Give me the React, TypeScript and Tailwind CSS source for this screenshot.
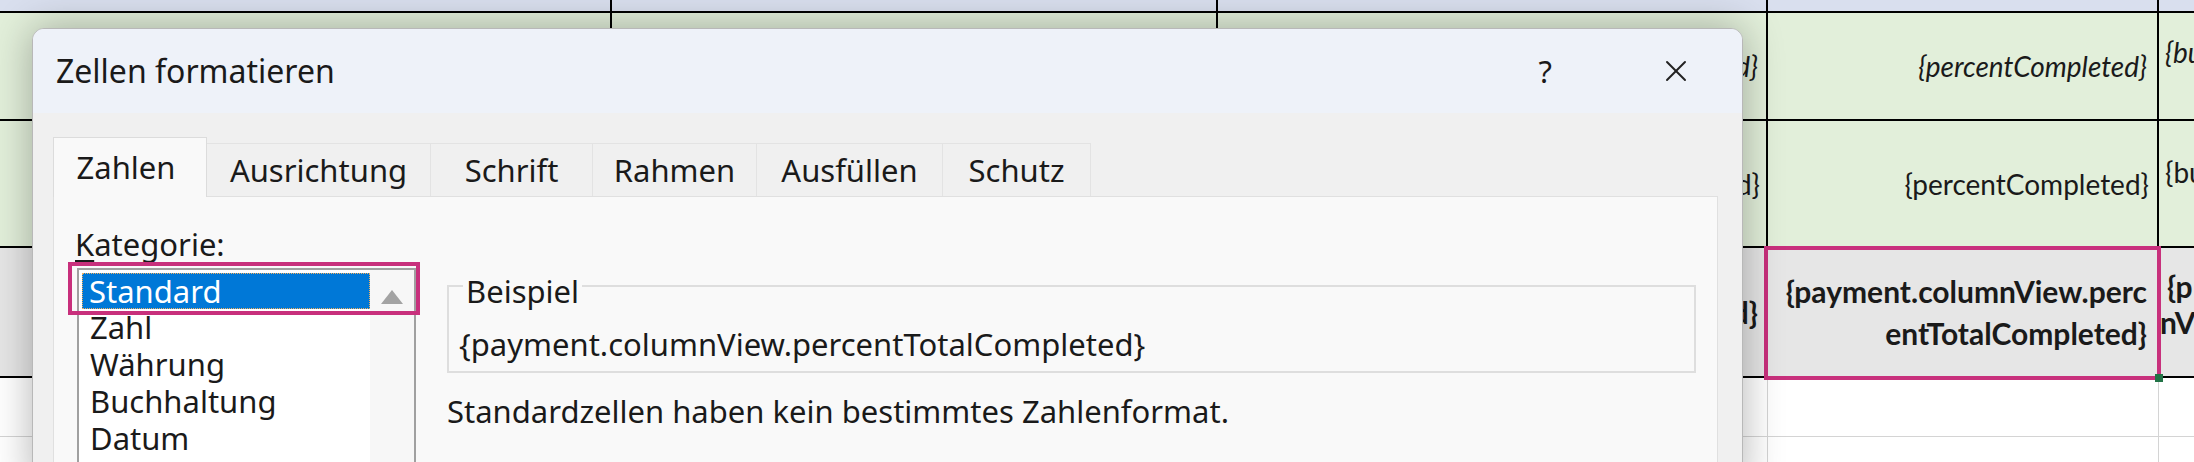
import { X } from "lucide-react";

const ui = { fontFamily: '"Noto Sans", "Open Sans", sans-serif' };
const xl = { fontFamily: 'Lato, "Liberation Sans", sans-serif' };

const tabs = [
  { label: "Zahlen", w: "w-[154px]" },
  { label: "Ausrichtung", w: "w-[224px]" },
  { label: "Schrift", w: "w-[162px]" },
  { label: "Rahmen", w: "w-[164px]" },
  { label: "Ausfüllen", w: "w-[186px]" },
  { label: "Schutz", w: "w-[148px]" },
];
const categories = ["Zahl", "Währung", "Buchhaltung", "Datum", "Uhrzeit"];

function Sheet() {
  return (
    <div
      className="grid h-[462px] w-[2194px] grid-cols-[612px_606px_550px_391px_35px] grid-rows-[13px_108px_127px_130px_59px_25px] text-[28px] text-[#1a1a1a]"
      style={xl}
    >
      {/* header strip */}
      <div className="border-r-2 border-b-2 border-black bg-[#d9dfee]" />
      <div className="border-r-2 border-b-2 border-black bg-[#d9dfee]" />
      <div className="border-r-2 border-b-2 border-black bg-[#d9dfee]" />
      <div className="border-r-2 border-b-2 border-black bg-[#d9dfee]" />
      <div className="border-b-2 border-black bg-[#d9dfee]" />

      {/* row 1 */}
      <div className="border-r-2 border-b-2 border-black bg-[#e2efda]" />
      <div className="border-r-2 border-b-2 border-black bg-[#e2efda]" />
      <div className="flex items-center justify-end border-r-2 border-b-2 border-black bg-[#e2efda] pr-[8px] italic">
        {"{payment.percentTotalCompleted}"}
      </div>
      <div className="flex items-center justify-end border-r-2 border-b-2 border-black bg-[#e2efda] pr-[10px] italic">
        {"{percentCompleted}"}
      </div>
      <div className="overflow-hidden whitespace-nowrap border-b-2 border-black bg-[#e2efda] pt-[18px] pl-[6px] italic">
        {"{budget}"}
      </div>

      {/* row 2 */}
      <div className="border-r-2 border-b-2 border-black bg-[#e2efda]" />
      <div className="border-r-2 border-b-2 border-black bg-[#e2efda]" />
      <div className="flex items-center justify-end border-r-2 border-b-2 border-black bg-[#e2efda] pr-[6px]">
        {"{payment.percentTotalCompleted}"}
      </div>
      <div className="flex items-center justify-end border-r-2 border-b-2 border-black bg-[#e2efda] pr-[8px]">
        {"{percentCompleted}"}
      </div>
      <div className="overflow-hidden whitespace-nowrap border-b-2 border-black bg-[#e2efda] pt-[30px] pl-[6px]">
        {"{budget}"}
      </div>

      {/* row 3 */}
      <div className="border-r-2 border-b-2 border-black bg-[#e6e6e6]" />
      <div className="border-r-2 border-b-2 border-black bg-[#e6e6e6]" />
      <div className="flex items-center justify-end border-r-2 border-b-2 border-black bg-[#e6e6e6] pr-[8px] text-[30px] font-bold">
        {"{payment.percentTotalCompleted}"}
      </div>
      <div className="relative flex flex-col items-end justify-center border-r-2 border-b-2 border-black bg-[#e6e6e6] pr-[10px] text-[30px] font-bold leading-[42px]">
        <span>{"{payment.columnView.perc"}</span>
        <span>{"entTotalCompleted}"}</span>
        <div className="absolute -top-[2px] -left-[4px] -right-[4px] -bottom-[4px] border-[4px] border-[#c8307c]" />
        <div className="absolute -right-[6px] -bottom-[6px] h-[8px] w-[8px] bg-[#217346]" />
      </div>
      <div className="overflow-hidden whitespace-nowrap border-b-2 border-black bg-[#e6e6e6] pt-[20px] text-[30px] font-bold leading-[36px]">
        <div className="pl-[8px]">{"{p"}</div>
        <div className="pl-[1px]">nV</div>
      </div>

      {/* row 4 */}
      <div className="border-r border-b border-[#d4d4d4] bg-white" />
      <div className="border-r border-b border-[#d4d4d4] bg-white" />
      <div className="border-r border-b border-[#d4d4d4] bg-white" />
      <div className="border-r border-b border-[#d4d4d4] bg-white" />
      <div className="border-b border-[#d4d4d4] bg-white" />

      {/* row 5 */}
      <div className="border-r border-[#d4d4d4] bg-white" />
      <div className="border-r border-[#d4d4d4] bg-white" />
      <div className="border-r border-[#d4d4d4] bg-white" />
      <div className="border-r border-[#d4d4d4] bg-white" />
      <div className="bg-white" />
    </div>
  );
}

function Dialog() {
  return (
    <div
      className="absolute top-[28px] left-[32px] h-[460px] w-[1711px] overflow-hidden rounded-t-[12px] border border-[#b8b8b8] bg-[#f0f0f0] text-[31px] text-[#1a1a1a] shadow-[0_0_40px_rgba(0,0,0,0.3)]"
      style={ui}
    >
      {/* title bar */}
      <div className="flex h-[84px] items-center bg-[#eef2f9] pl-[23px]">
        <span className="flex-1 text-[32px]">Zellen formatieren</span>
        <span className="mr-[106px] text-[31px]">?</span>
        <X className="mr-[48px] h-[36px] w-[36px] text-[#222]" strokeWidth={1.3} />
      </div>

      {/* tabs */}
      <div className="flex h-[83px] items-end pl-[20px]">
        {tabs.map((t, i) =>
          i === 0 ? (
            <div
              key={t.label}
              className={`relative z-10 -mb-px flex h-[60px] items-center justify-center border border-b-0 border-[#dcdcdc] bg-[#f9f9f9] pr-[8px] ${t.w}`}
            >
              {t.label}
            </div>
          ) : (
            <div
              key={t.label}
              className={`flex h-[53px] items-center justify-center border border-b-0 border-l-0 border-[#e3e3e3] bg-[#f0f0f0] ${t.w}`}
            >
              {t.label}
            </div>
          )
        )}
      </div>

      {/* panel */}
      <div className="mr-[24px] ml-[20px] flex h-[300px] items-start border border-[#e0e0e0] bg-[#f9f9f9]">
        <div className="relative w-[372px] shrink-0 pt-[28px] pl-[21px]">
          <div className="leading-[38px]">
            <span className="underline underline-offset-4">K</span>ategorie:
          </div>
          <div className="mt-[5px] ml-[2px] flex h-[300px] w-[339px] border-2 border-[#a0a0a0] bg-white">
            <div className="flex-1 pt-[3px] pl-[3px]">
              <div className="flex h-[36px] items-center border border-dotted border-[#f0b060] bg-[#0078d7] pl-[6px] text-white">
                Standard
              </div>
              {categories.map((c) => (
                <div key={c} className="flex h-[37px] items-center pl-[8px]">
                  {c}
                </div>
              ))}
            </div>
            <div className="flex w-[44px] justify-center bg-[#f7f7f7] pt-[20px]">
              <svg width="22" height="14" viewBox="0 0 22 14">
                <polygon points="11,0 22,14 0,14" fill="#a3a3a3" />
              </svg>
            </div>
          </div>
          <div className="absolute top-[65px] left-[14px] h-[53px] w-[352px] border-[4px] border-[#c8307c]" />
        </div>

        <div className="flex-1 pr-[21px] pl-[21px]">
          <div className="relative mt-[88px] h-[88px] border-2 border-[#dedede]">
            <div className="absolute -top-[14px] left-[14px] bg-[#f9f9f9] px-[3px] leading-[36px]">Beispiel</div>
            <div className="absolute top-[38px] left-[10px] leading-[38px]">
              {"{payment.columnView.percentTotalCompleted}"}
            </div>
          </div>
          <div className="mt-[19px] leading-[38px]">Standardzellen haben kein bestimmtes Zahlenformat.</div>
        </div>
      </div>
    </div>
  );
}

export default function App() {
  return (
    <div className="relative h-[462px] w-[2194px] overflow-hidden bg-white">
      <Sheet />
      <Dialog />
    </div>
  );
}
